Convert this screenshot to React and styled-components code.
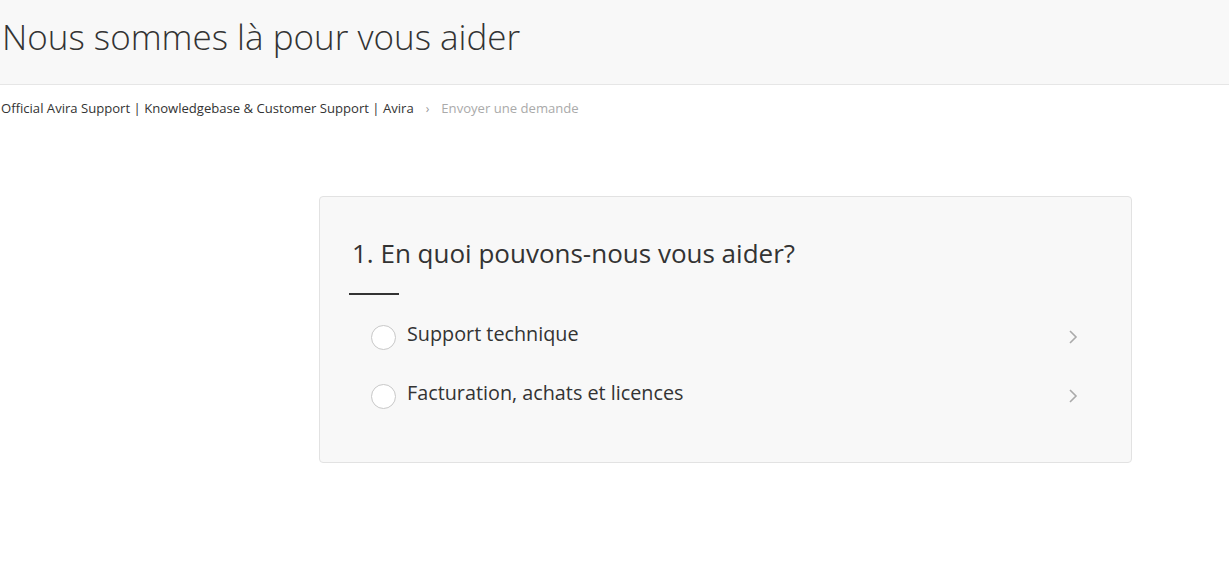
import React, { useState } from "react";
import styled, { createGlobalStyle } from "styled-components";

const Global = createGlobalStyle`
  html, body {
    margin: 0;
    padding: 0;
    background: #fff;
    font-family: "Open Sans", "Noto Sans", sans-serif;
    color: #333;
  }
`;

const Header = styled.header`
  background: #f8f8f8;
  border-bottom: 1px solid #e6e6e6;
  height: 84px;
  display: flex;
  align-items: center;
  padding: 0 2px;
`;

const Title = styled.h1`
  margin: 0;
  font-weight: 300;
  font-size: 35px;
  color: #333;
  padding-bottom: 12px;
`;

const Crumbs = styled.nav`
  display: flex;
  align-items: center;
  gap: 12px;
  padding: 14px 1px 0;
  font-size: 13.1px;
  color: #444;
`;

const Crumb = styled.span`
  color: ${(p) => (p.current ? "#aaa" : "#333")};
`;

const Sep = styled.span`
  color: #999;
  font-size: 12px;
`;

const Main = styled.main`
  display: flex;
  padding: 79px 0 0 319px;
`;

const Card = styled.section`
  width: 813px;
  box-sizing: border-box;
  height: 267px;
  background: #f8f8f8;
  border: 1px solid #e2e2e2;
  border-radius: 4px;
  padding: 38px 52px 0 29px;
`;

const Question = styled.h2`
  margin: 0 0 0 3px;
  font-weight: 400;
  font-size: 26px;
  color: #333;
`;

const Rule = styled.div`
  width: 50px;
  height: 2px;
  background: #333;
  margin-top: 22px;
  margin-bottom: 15px;
`;

const Options = styled.ul`
  list-style: none;
  margin: 0;
  padding: 0 0 0 22px;
  display: flex;
  flex-direction: column;
  gap: 10px;
`;

const Option = styled.li`
  display: flex;
  align-items: center;
  height: 49px;
  cursor: pointer;
`;

const Radio = styled.span`
  width: 23px;
  height: 23px;
  border-radius: 50%;
  border: 1px solid ${(p) => (p.checked ? "#2a8ce2" : "#c8c8c8")};
  background: #fff;
  flex: none;
  margin-top: 5px;
  margin-right: 11px;
`;

const Label = styled.span`
  flex: 1;
  font-size: 19.8px;
  color: #333;
  margin-top: -3px;
`;

const Chevron = styled.svg`
  width: 12px;
  height: 16px;
  flex: none;
  margin-top: 4px;
`;

const options = ["Support technique", "Facturation, achats et licences"];

export default function App() {
  const [picked, setPicked] = useState(null);
  return (
    <>
      <Global />
      <Header>
        <Title>Nous sommes là pour vous aider</Title>
      </Header>
      <Crumbs>
        <Crumb>Official Avira Support | Knowledgebase &amp; Customer Support | Avira</Crumb>
        <Sep>›</Sep>
        <Crumb current>Envoyer une demande</Crumb>
      </Crumbs>
      <Main>
        <Card>
          <Question>1. En quoi pouvons-nous vous aider?</Question>
          <Rule />
          <Options>
            {options.map((o, i) => (
              <Option key={o} onClick={() => setPicked(i)}>
                <Radio checked={picked === i} />
                <Label>{o}</Label>
                <Chevron viewBox="0 0 12 16">
                  <path d="M3 2 L9 8 L3 14" fill="none" stroke="#aaa" strokeWidth="1.6" />
                </Chevron>
              </Option>
            ))}
          </Options>
        </Card>
      </Main>
    </>
  );
}
